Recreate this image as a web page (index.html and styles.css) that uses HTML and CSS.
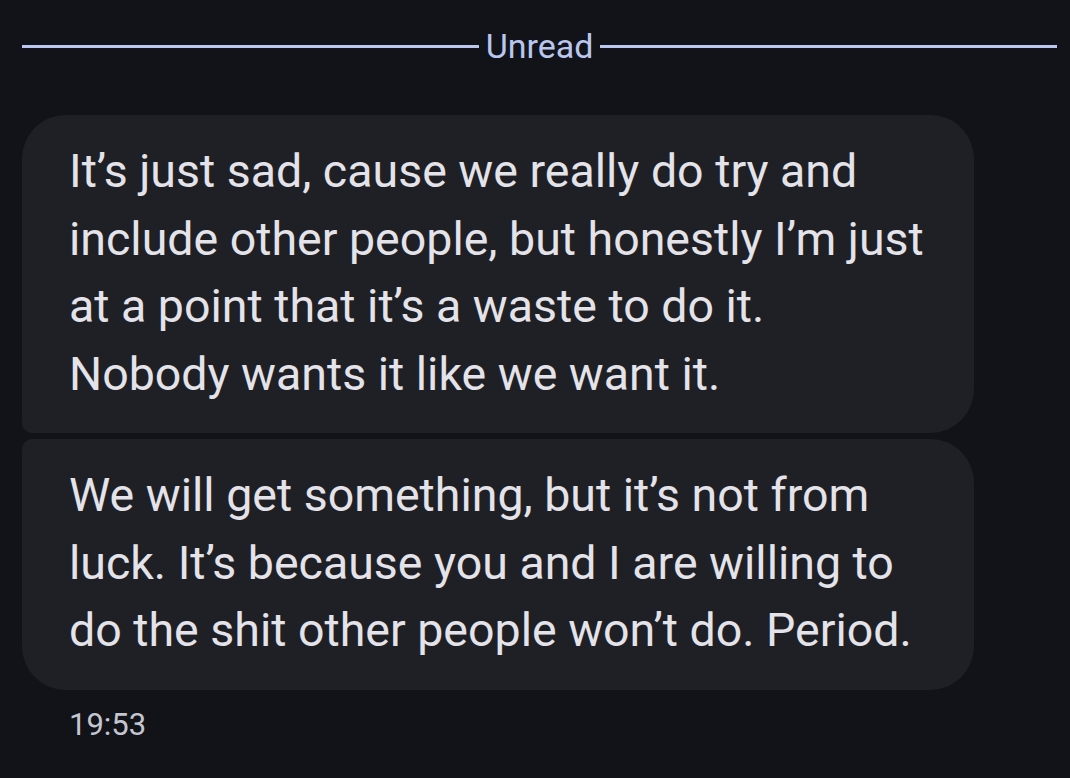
FILE: index.html
```html
<!DOCTYPE html>
<html>
<head>
<meta charset="utf-8">
<link rel="stylesheet" href="styles.css">
</head>
<body>
<div class="page">
  <div class="divider">
    <span class="rule"></span>
    <span class="divider-label">Unread</span>
    <span class="rule"></span>
  </div>
  <div class="thread">
    <div class="bubble first">It’s just sad, cause we really do try and<br>include other people, but honestly I’m just<br>at a point that it’s a waste to do it.<br>Nobody wants it like we want it.</div>
    <div class="bubble last">We will get something, but it’s not from<br>luck. It’s because you and I are willing to<br>do the shit other people won’t do. Period.</div>
    <div class="time">19:53</div>
  </div>
</div>
</body>
</html>
```
FILE: styles.css
```css
html, body {
  margin: 0;
  padding: 0;
  background: #121318;
}
body {
  width: 1070px;
  height: 778px;
  overflow: hidden;
  font-family: Roboto, "Noto Sans", sans-serif;
}
.page {
  padding: 22px 13px 0 22px;
}
.divider {
  display: flex;
  align-items: center;
  gap: 7px;
  height: 48px;
}
.rule {
  flex: 1;
  height: 3px;
  background: #b9c6ee;
}
.divider-label {
  color: #b9c6ee;
  font-size: 34px;
  line-height: 48px;
}
.thread {
  margin-top: 45px;
  display: flex;
  flex-direction: column;
  gap: 6px;
}
.bubble {
  width: 952px;
  box-sizing: border-box;
  background: #1f2025;
  color: #e3e3e9;
  font-size: 46.5px;
  line-height: 67.5px;
  padding: 23px 10px 25px 47px;
  white-space: nowrap;
}
.bubble.first {
  border-radius: 44px 44px 44px 10px;
}
.bubble.last {
  border-radius: 10px 44px 44px 44px;
}
.time {
  color: #c4c6d0;
  font-size: 31px;
  padding: 10px 0 0 47px;
}
```
